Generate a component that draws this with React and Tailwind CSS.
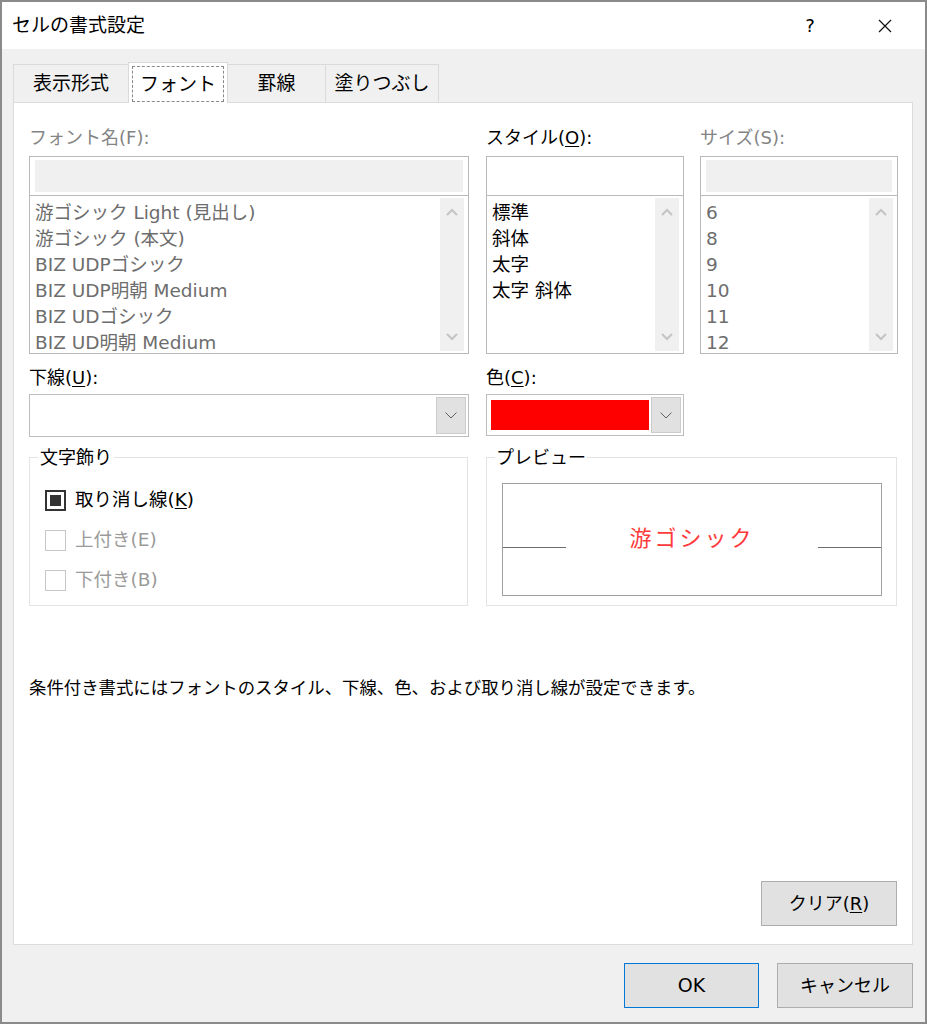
import React from 'react';

const FONT = { fontFamily: '"DejaVu Sans", "Noto Sans CJK JP", sans-serif' };

const fontNames = [
  '游ゴシック Light (見出し)',
  '游ゴシック (本文)',
  'BIZ UDPゴシック',
  'BIZ UDP明朝 Medium',
  'BIZ UDゴシック',
  'BIZ UD明朝 Medium',
];
const styles = ['標準', '斜体', '太字', '太字 斜体'];
const sizes = ['6', '8', '9', '10', '11', '12'];

function Chevron({ up, color = '#c4c4c4' }) {
  return (
    <svg width="12" height="8" viewBox="0 0 12 8">
      <polyline
        points={up ? '1,7 6,2 11,7' : '1,1 6,6 11,1'}
        fill="none"
        stroke={color}
        strokeWidth="2"
      />
    </svg>
  );
}

function DropArrow() {
  return (
    <svg width="12" height="7" viewBox="0 0 12 7">
      <polyline points="0.5,0.5 6,6 11.5,0.5" fill="none" stroke="#606060" strokeWidth="1" />
    </svg>
  );
}

function ListBox({ width, items, disabled, inputGray }) {
  return (
    <div className={`flex flex-col h-[198px] border border-[#b9b9b9] bg-white ${width}`}>
      <div className="h-[39px] px-[5px] py-[3px] border-b border-[#b9b9b9]">
        {inputGray && <div className="h-full bg-[#f0f0f0]" />}
      </div>
      <div className="flex-1 flex overflow-hidden">
        <div
          className={`flex-1 pl-[5px] pt-[4px] text-[18.5px] leading-[26px] whitespace-nowrap overflow-hidden ${
            disabled ? 'text-[#6d6d6d]' : 'text-black'
          }`}
        >
          {items.map((it) => (
            <div key={it}>{it}</div>
          ))}
        </div>
        <div className="w-[24px] my-[2px] mr-[4px] bg-[#f0f0f0] flex flex-col items-center justify-between py-[10px]">
          <Chevron up />
          <Chevron />
        </div>
      </div>
    </div>
  );
}

function Label({ children, disabled }) {
  return (
    <div className={`h-[31px] pt-[1px] text-[18px] leading-[24px] ${disabled ? 'text-[#848484]' : 'text-black'}`}>
      {children}
    </div>
  );
}

function Check({ checked, children }) {
  return (
    <div className="h-[40px] flex items-center gap-[9px]">
      {checked ? (
        <div className="w-[21px] h-[21px] border-2 border-[#333333] flex items-center justify-center">
          <div className="w-[11px] h-[11px] bg-[#333333]" />
        </div>
      ) : (
        <div className="w-[21px] h-[21px] border border-[#c8c8c8]" />
      )}
      <span className={`text-[18.5px] leading-[24px] ${checked ? 'text-black' : 'text-[#9a9a9a]'}`}>{children}</span>
    </div>
  );
}

export default function App() {
  return (
    <div style={FONT} className="w-[927px] h-[1024px] border-2 border-[#8a8a8a] flex flex-col bg-[#f0f0f0]">
      {/* TITLE BAR */}
      <div className="h-[47px] bg-white flex items-center pl-[10px]">
        <span className="text-[19px] text-black flex-1">セルの書式設定</span>
        <span className="text-[18px] text-black w-[20px] text-center mr-[58px]">?</span>
        <svg width="14" height="14" viewBox="0 0 14 14" className="mr-[33px]">
          <path d="M1 1 L13 13 M13 1 L1 13" stroke="#111" strokeWidth="1.2" fill="none" />
        </svg>
      </div>

      {/* BODY */}
      <div className="flex-1 flex flex-col pl-[11px] pr-[12px] pt-[13px]">
        {/* TABS */}
        <div className="h-[40px] flex items-end text-[19px] text-black">
          <div className="w-[115px] h-[38px] border-t border-l border-[#dadada] flex items-center justify-center">
            表示形式
          </div>
          <div className="w-[100px] h-[41px] -mb-px bg-white border-t border-x border-[#dadada] relative z-10 p-[3px] pb-[1px]">
            <div className="h-full border border-dashed border-[#8a8a8a] flex items-center justify-center">
              フォント
            </div>
          </div>
          <div className="w-[97px] h-[38px] border-t border-[#dadada] flex items-center justify-center">
            罫線
          </div>
          <div className="w-[114px] h-[38px] border-t border-x border-[#dadada] flex items-center justify-center">
            塗りつぶし
          </div>
        </div>

        {/* PANEL */}
        <div className="w-[900px] h-[843px] bg-white border border-[#dcdcdc] flex flex-col pl-[15px] pr-[14px] pt-[22px] pb-[18px]">
          {/* row 1 */}
          <div className="flex gap-[17px]">
            <div className="flex flex-col">
              <Label disabled>フォント名(F):</Label>
              <ListBox width="w-[440px]" items={fontNames} disabled inputGray />
            </div>
            <div className="flex flex-col">
              <Label>
                スタイル(<span className="underline underline-offset-2">O</span>):
              </Label>
              <ListBox width="w-[198px]" items={styles} />
            </div>
            <div className="flex flex-col ml-[-1px]">
              <Label disabled>サイズ(S):</Label>
              <ListBox width="w-[198px]" items={sizes} disabled inputGray />
            </div>
          </div>

          {/* row 2 */}
          <div className="flex gap-[17px]">
            <div className="flex flex-col w-[440px]">
              <div className="h-[40px] pt-[12px] text-[18px] leading-[24px] text-black">
                下線(<span className="underline underline-offset-2">U</span>):
              </div>
              <div className="h-[43px] border border-[#bdbdbd] bg-white flex justify-end p-[2px]">
                <div className="w-[30px] h-full bg-[#e1e1e1] border border-[#cccccc] flex items-center justify-center">
                  <DropArrow />
                </div>
              </div>
            </div>
            <div className="flex flex-col w-[198px]">
              <div className="h-[40px] pt-[12px] text-[18px] leading-[24px] text-black">
                色(<span className="underline underline-offset-2">C</span>):
              </div>
              <div className="h-[42px] border border-[#bdbdbd] bg-white flex items-stretch gap-[2px] p-[2px]">
                <div className="flex-1 my-[3px] ml-[2px] bg-[#ff0000]" />
                <div className="w-[30px] bg-[#e1e1e1] border border-[#cccccc] flex items-center justify-center">
                  <DropArrow />
                </div>
              </div>
            </div>
          </div>

          {/* row 3 */}
          <div className="flex gap-[18px] mt-[20px]">
            <div className="relative w-[439px] h-[149px] border border-[#e3e3e3] pl-[15px] pt-[22px]">
              <span className="absolute -top-[12px] left-[8px] bg-white px-[2px] text-[18px] leading-[24px] text-black">
                文字飾り
              </span>
              <Check checked>
                取り消し線(<span className="underline underline-offset-2">K</span>)
              </Check>
              <Check>上付き(E)</Check>
              <Check>下付き(B)</Check>
            </div>
            <div className="relative w-[411px] h-[149px] border border-[#e3e3e3] pl-[15px] pt-[25px]">
              <span className="absolute -top-[12px] left-[8px] bg-white px-[1px] text-[18px] leading-[24px] text-black">
                プレビュー
              </span>
              <div className="w-[380px] h-[113px] border border-[#a0a0a0] flex items-start">
                <div className="w-[63px] h-px mt-[63px] bg-[#6e6e6e]" />
                <div className="flex-1 text-center pt-[41px] text-[22px] leading-[28px] tracking-[3px] text-[#ff3b3b]">
                  游ゴシック
                </div>
                <div className="w-[63px] h-px mt-[63px] bg-[#6e6e6e]" />
              </div>
            </div>
          </div>

          {/* description */}
          <div className="mt-[70px] text-[17.4px] leading-[24px] text-black">
            条件付き書式にはフォントのスタイル、下線、色、および取り消し線が設定できます。
          </div>

          <div className="flex-1" />

          <div className="flex justify-end pr-[1px]">
            <button className="w-[136px] h-[45px] bg-[#e1e1e1] border border-[#adadad] text-[18px] text-black">
              クリア(<span className="underline underline-offset-2">R</span>)
            </button>
          </div>
        </div>

        {/* FOOTER BUTTONS */}
        <div className="flex justify-end gap-[18px] pt-[18px]">
          <button className="w-[135px] h-[45px] bg-[#e1e1e1] border border-[#0078d7] text-[19px] text-black">
            OK
          </button>
          <button className="w-[136px] h-[45px] bg-[#e1e1e1] border border-[#adadad] text-[18px] text-black">
            キャンセル
          </button>
        </div>
      </div>
    </div>
  );
}
